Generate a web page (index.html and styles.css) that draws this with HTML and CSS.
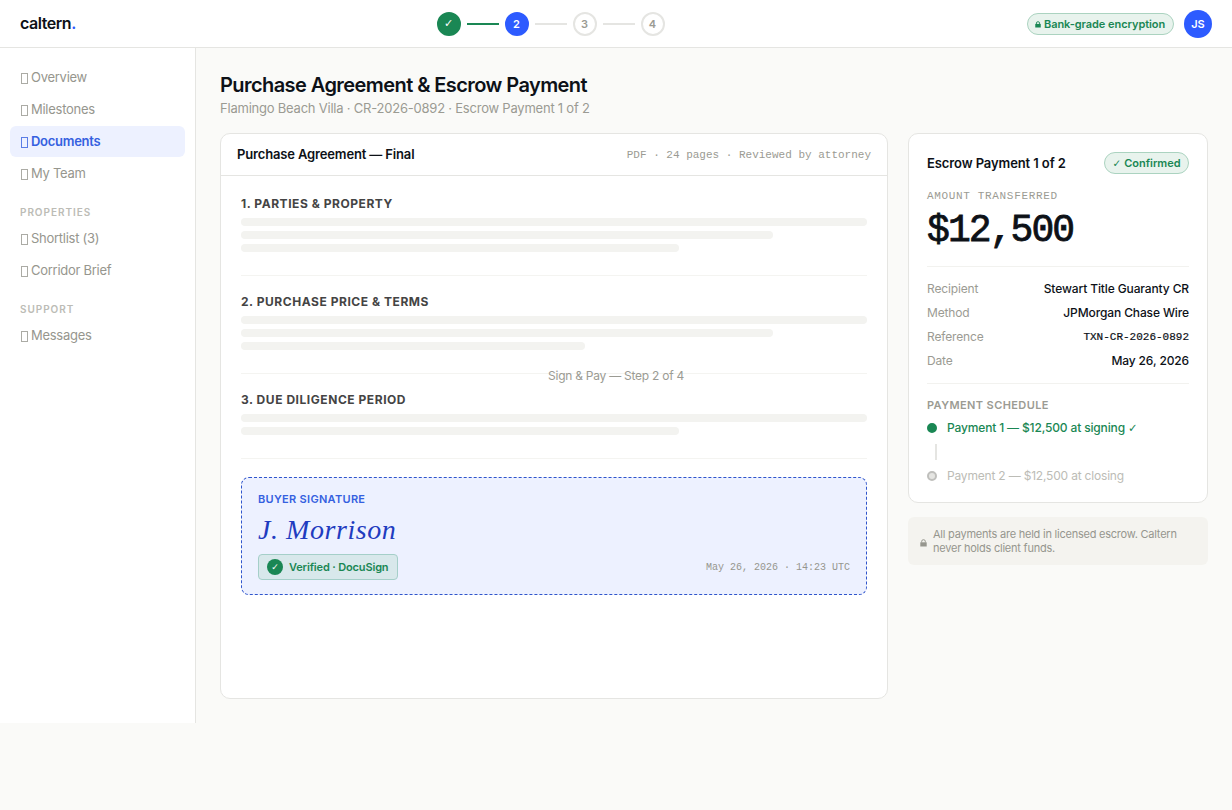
FILE: index.html
```html
<!DOCTYPE html>
<html lang="en">
<head>
  <meta charset="UTF-8" />
  <meta name="viewport" content="width=device-width, initial-scale=1" />
  <title>caltern. - Sign &amp; Pay</title>
  <link rel="stylesheet" href="styles.css">
</head>
<body>

<header class="topbar">
  <div class="logo">caltern<span>.</span></div>
  <div class="steps">
    <div class="step done">✓</div>
    <div class="step-line done"></div>
    <div class="step active">2</div>
    <div class="step-line"></div>
    <div class="step">3</div>
    <div class="step-line"></div>
    <div class="step">4</div>
  </div>
  <div class="topbar-right">
    <div class="pill secure-pill">
      <svg class="lock" viewBox="0 0 7 8"><path d="M0.3 3.3h6.4v4.2h-6.4z" fill="currentColor"/><path d="M1.7 3.5V2.3a1.8 1.6 0 0 1 3.6 0v1.2" fill="none" stroke="currentColor"/></svg>
      <span>Bank-grade encryption</span>
    </div>
    <div class="avatar">JS</div>
  </div>
</header>

<div class="step-caption">Sign &amp; Pay — Step 2 of 4</div>

<div class="layout">
  <nav class="sidebar">
    <a class="nav-item"><i class="nav-icon"></i>Overview</a>
    <a class="nav-item"><i class="nav-icon"></i>Milestones</a>
    <a class="nav-item active"><i class="nav-icon"></i>Documents</a>
    <a class="nav-item"><i class="nav-icon"></i>My Team</a>
    <div class="nav-label">PROPERTIES</div>
    <a class="nav-item"><i class="nav-icon"></i>Shortlist (3)</a>
    <a class="nav-item"><i class="nav-icon"></i>Corridor Brief</a>
    <div class="nav-label">SUPPORT</div>
    <a class="nav-item"><i class="nav-icon"></i>Messages</a>
  </nav>

  <main class="main">
    <h1 class="title">Purchase Agreement &amp; Escrow Payment</h1>
    <p class="subtitle">Flamingo Beach Villa · CR-2026-0892 · Escrow Payment 1 of 2</p>

    <div class="columns">
      <section class="card doc">
        <div class="doc-header">
          <span class="doc-title">Purchase Agreement — Final</span>
          <span class="doc-meta">PDF · 24 pages · Reviewed by attorney</span>
        </div>
        <div class="doc-body">
          <div class="clause">
            <h2 class="clause-title">1. PARTIES &amp; PROPERTY</h2>
            <div class="bar"></div>
            <div class="bar w85"></div>
            <div class="bar w70"></div>
          </div>
          <div class="clause">
            <h2 class="clause-title">2. PURCHASE PRICE &amp; TERMS</h2>
            <div class="bar"></div>
            <div class="bar w85"></div>
            <div class="bar w55"></div>
          </div>
          <div class="clause">
            <h2 class="clause-title">3. DUE DILIGENCE PERIOD</h2>
            <div class="bar"></div>
            <div class="bar w70"></div>
          </div>
          <div class="signature">
            <div class="sig-label">BUYER SIGNATURE</div>
            <div class="sig-name">J. Morrison</div>
            <div class="sig-footer">
              <div class="verified"><span class="verified-check">✓</span><span>Verified · DocuSign</span></div>
              <div class="sig-date">May 26, 2026 · 14:23 UTC</div>
            </div>
          </div>
        </div>
      </section>

      <aside class="side">
        <section class="card payment">
          <div class="payment-head">
            <span class="payment-title">Escrow Payment 1 of 2</span>
            <span class="pill confirmed-pill"><span class="tick">✓</span>Confirmed</span>
          </div>
          <div class="amount-label">AMOUNT TRANSFERRED</div>
          <div class="amount">$12,500</div>
          <div class="details">
            <div class="row"><span>Recipient</span><b>Stewart Title Guaranty CR</b></div>
            <div class="row"><span>Method</span><b>JPMorgan Chase Wire</b></div>
            <div class="row"><span>Reference</span><b class="mono">TXN-CR-2026-0892</b></div>
            <div class="row"><span>Date</span><b>May 26, 2026</b></div>
          </div>
          <div class="schedule-label">PAYMENT SCHEDULE</div>
          <div class="schedule-item paid"><span class="dot"></span><span>Payment 1 — $12,500 at signing <span class="tick">✓</span></span></div>
          <div class="connector"></div>
          <div class="schedule-item"><span class="dot"></span><span>Payment 2 — $12,500 at closing</span></div>
        </section>
        <div class="notice">
          <svg class="lock" viewBox="0 0 7 8"><path d="M0.3 3.3h6.4v4.2h-6.4z" fill="currentColor"/><path d="M1.7 3.5V2.3a1.8 1.6 0 0 1 3.6 0v1.2" fill="none" stroke="currentColor"/></svg>
          <p>All payments are held in licensed escrow. Caltern<br>never holds client funds.</p>
        </div>
      </aside>
    </div>
  </main>
</div>

</body>
</html>
```
FILE: styles.css
```css
* {
  box-sizing: border-box;
  margin: 0;
  padding: 0;
}
body {
  position: relative;
  font-family: Inter, "Liberation Sans", sans-serif;
  background: #fafaf8;
  color: #0d1117;
  font-size: 13px;
}

/* top bar */
.topbar {
  display: flex;
  align-items: center;
  justify-content: space-between;
  height: 48px;
  padding: 0 20px;
  background: #fff;
  border-bottom: 1px solid #e5e5e2;
}
.logo {
  width: 54px;
  padding-bottom: 1px;
  font-size: 16px;
  font-weight: 600;
  letter-spacing: -0.45px;
  white-space: nowrap;
}
.logo span {
  color: #2d5bff;
}
.steps {
  display: flex;
  align-items: center;
  gap: 6px;
}
.step {
  display: flex;
  align-items: center;
  justify-content: center;
  width: 24px;
  height: 24px;
  border: 2px solid #e5e5e2;
  border-radius: 50%;
  background: #fff;
  color: #9b9b93;
  font-size: 11px;
  font-weight: 600;
}
.step.done {
  border-color: #1a8754;
  background: #1a8754;
  color: #fff;
  font-family: "DejaVu Sans", sans-serif;
  font-weight: 400;
}
.step.active {
  border-color: #2d5bff;
  background: #2d5bff;
  color: #fff;
}
.step-line {
  width: 32px;
  height: 2px;
  background: #e5e5e2;
}
.step-line.done {
  background: #1a8754;
}
.topbar-right {
  display: flex;
  align-items: center;
  gap: 10px;
}
.pill {
  display: flex;
  align-items: center;
  height: 22px;
  border: 1px solid #abd3c0;
  border-radius: 11px;
  background: #e8f3ed;
  color: #1a8754;
  font-size: 11px;
  font-weight: 600;
  white-space: nowrap;
}
.secure-pill {
  gap: 3px;
  width: 147px;
  padding-left: 7px;
  letter-spacing: -0.06px;
}
.lock {
  flex: none;
  width: 7px;
  height: 8px;
}
.secure-pill .lock {
  width: 6px;
  height: 7px;
  margin-top: 2px;
}
.tick {
  font-family: "DejaVu Sans", sans-serif;
  font-size: 0.95em;
  font-weight: 400;
}
.avatar {
  display: flex;
  align-items: center;
  justify-content: center;
  width: 28px;
  height: 28px;
  border-radius: 50%;
  background: #2d5bff;
  color: #fff;
  font-size: 11px;
  font-weight: 600;
}

/* caption floating over the page centre */
.step-caption {
  position: absolute;
  top: 368px;
  left: 0;
  width: 100%;
  text-align: center;
  color: #9b9b93;
  font-size: 12px;
  line-height: 16px;
  letter-spacing: -0.25px;
}

/* sidebar */
.layout {
  display: flex;
  height: 675px;
}
.sidebar {
  flex: none;
  width: 196px;
  padding: 14px 10px;
  background: #fff;
  border-right: 1px solid #e5e5e2;
}
.nav-item {
  display: flex;
  align-items: center;
  gap: 3px;
  height: 31px;
  margin-bottom: 1px;
  padding: 0 0 1px 11px;
  border-radius: 6px;
  color: #96968e;
  letter-spacing: -0.27px;
}
.nav-item.active {
  background: #edf1ff;
  color: #3560e0;
  font-weight: 600;
  letter-spacing: -0.27px;
}
.nav-icon {
  width: 7px;
  height: 11px;
  margin-top: 2px;
  border: 1px solid currentColor;
  opacity: 0.8;
}
.nav-label {
  height: 33px;
  padding: 15px 10px 0;
  color: #bcbcb6;
  font-size: 10px;
  font-weight: 600;
  line-height: 14px;
  letter-spacing: 0.95px;
}

/* main */
.main {
  flex: 1;
  padding: 24px;
}
.title {
  font-size: 20px;
  font-weight: 600;
  line-height: 26px;
  letter-spacing: -0.57px;
}
.subtitle {
  margin-top: 1px;
  color: #9b9b93;
  line-height: 18px;
  letter-spacing: -0.22px;
}
.columns {
  display: flex;
  gap: 20px;
  margin-top: 16px;
}
.card {
  background: #fff;
  border: 1px solid #e5e5e2;
  border-radius: 10px;
}
.doc {
  flex: 1;
  height: 566px;
}
.doc-header {
  display: flex;
  align-items: center;
  justify-content: space-between;
  height: 42px;
  padding: 0 16px;
  border-bottom: 1px solid #e5e5e2;
}
.doc-title,
.payment-title {
  font-weight: 600;
  letter-spacing: -0.1px;
}
.doc-title {
  padding-bottom: 1px;
  letter-spacing: -0.15px;
}
.doc-meta,
.sig-date,
.amount-label,
.amount,
.mono {
  font-family: "Liberation Mono", monospace;
}
.doc-meta {
  padding-top: 1px;
  color: #9b9b93;
  font-size: 11px;
}
.doc-body {
  padding: 20px;
}
.clause {
  margin-bottom: 18px;
  padding-bottom: 18px;
  border-bottom: 1px solid #f4f4f1;
}
.clause-title {
  margin-bottom: 7px;
  color: #444;
  font-size: 12px;
  font-weight: 700;
  line-height: 15px;
  letter-spacing: 0.55px;
}
.bar {
  height: 8px;
  margin-bottom: 5px;
  border-radius: 4px;
  background: #f3f3f0;
}
.w85 {
  width: 85%;
}
.w70 {
  width: 70%;
}
.w55 {
  width: 55%;
}
.signature {
  height: 118px;
  padding: 14px 16px;
  border: 1px dashed #2f55cc;
  border-radius: 8px;
  background: #edf1ff;
}
.sig-label {
  color: #3560e0;
  font-size: 11px;
  font-weight: 600;
  line-height: 14px;
  letter-spacing: 0.3px;
}
.sig-name {
  margin: 8px 0;
  color: #1f3cc0;
  font-family: "Liberation Serif", serif;
  font-size: 28px;
  font-style: italic;
  line-height: 32px;
  letter-spacing: 0.56px;
}
.sig-footer {
  display: flex;
  align-items: center;
  justify-content: space-between;
}
.verified {
  display: flex;
  align-items: center;
  gap: 6px;
  width: 140px;
  height: 26px;
  padding-left: 8px;
  border: 1px solid #a5cfc9;
  border-radius: 4px;
  background: #d8e8eb;
  color: #1a8754;
  font-size: 11px;
  font-weight: 600;
  letter-spacing: -0.15px;
  white-space: nowrap;
}
.verified-check {
  width: 16px;
  height: 16px;
  border-radius: 50%;
  background: #1a8754;
  color: #fff;
  font-family: "DejaVu Sans", sans-serif;
  font-size: 9px;
  font-weight: 400;
  line-height: 16px;
  text-align: center;
}
.sig-date {
  padding-top: 1px;
  color: #96968e;
  font-size: 10px;
}

/* payment panel */
.side {
  width: 300px;
}
.payment {
  height: 370px;
  padding: 18px;
}
.payment-head {
  display: flex;
  align-items: center;
  justify-content: space-between;
}
.confirmed-pill {
  gap: 3px;
  width: 85px;
  justify-content: center;
}
.amount-label {
  margin-top: 15px;
  color: #9b9b93;
  font-size: 11px;
  line-height: 14px;
  letter-spacing: 0.66px;
}
.amount {
  margin-top: 8px;
  font-size: 38px;
  line-height: 40px;
  letter-spacing: -1.92px;
  -webkit-text-stroke: 0.8px #0d1117;
}
.details {
  margin-top: 15px;
  padding: 9px 0 11px;
  border-top: 1px solid #f2f2ef;
  border-bottom: 1px solid #f2f2ef;
}
.row {
  display: flex;
  align-items: center;
  justify-content: space-between;
  height: 24px;
  color: #9b9b93;
  font-size: 12px;
  letter-spacing: -0.15px;
}
.row b {
  color: #0d1117;
  font-weight: 500;
  letter-spacing: -0.12px;
}
.row .mono {
  margin-top: 1px;
  font-size: 11px;
  letter-spacing: 0;
  -webkit-text-stroke: 0.2px #0d1117;
}
.schedule-label {
  margin: 14px 0 7px;
  color: #9b9b93;
  font-size: 11px;
  font-weight: 600;
  line-height: 14px;
  letter-spacing: 0.4px;
}
.schedule-item {
  display: flex;
  align-items: center;
  gap: 10px;
  height: 17px;
  color: #bcbcb6;
  font-size: 12px;
  letter-spacing: -0.19px;
}
.schedule-item.paid {
  color: #1a8754;
  font-weight: 500;
  letter-spacing: -0.15px;
}
.dot {
  width: 10px;
  height: 10px;
  margin-top: 1px;
  border: 2px solid #bfbfbc;
  border-radius: 50%;
  background: #e5e5e2;
}
.paid .dot {
  border-color: #1a8754;
  background: #1a8754;
}
.connector {
  width: 2px;
  height: 16px;
  margin: 8px 0 7px 8px;
  background: #e5e5e2;
}
.notice {
  display: flex;
  align-items: center;
  gap: 6px;
  height: 48px;
  margin-top: 14px;
  padding: 0 12px;
  border-radius: 6px;
  background: #f4f3ef;
  color: #96968e;
  font-size: 11px;
  line-height: 14px;
  letter-spacing: -0.23px;
  white-space: nowrap;
}
.notice .lock {
  margin-top: 4px;
}
```
